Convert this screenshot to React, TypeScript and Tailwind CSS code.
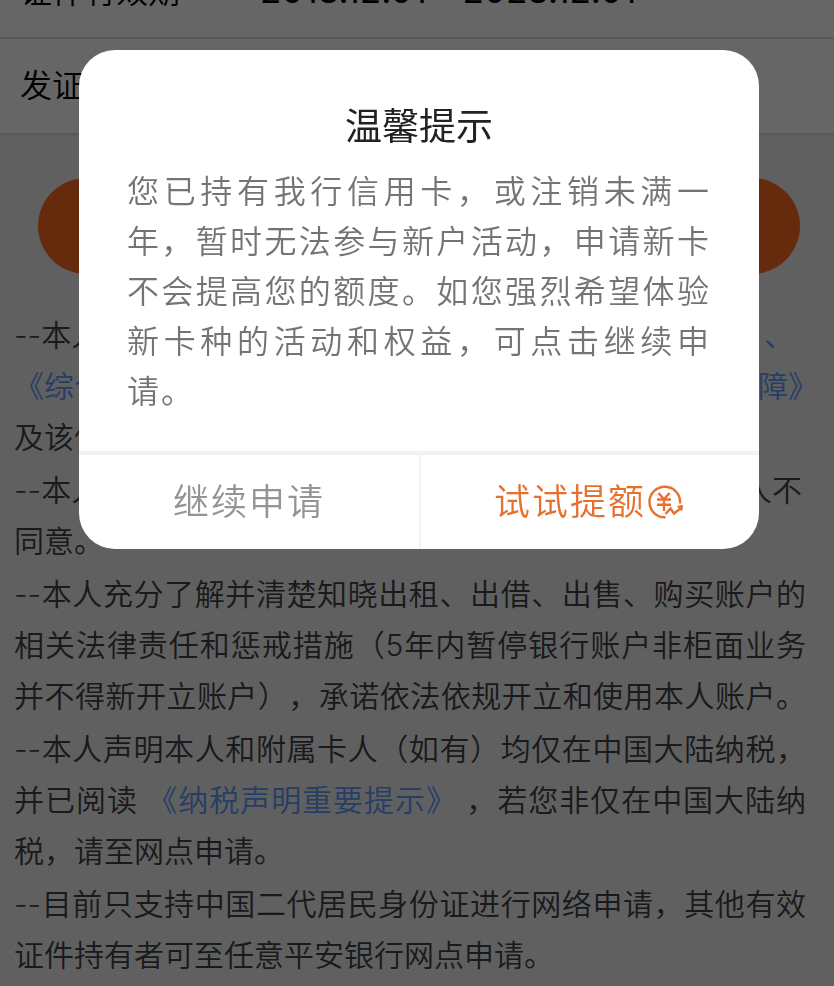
import type { ReactNode } from "react";

const FIELDS = [
  { label: "证件有效期", value: "2018.12.01 - 2028.12.01" },
  { label: "发证机关", value: "" },
];

function DocLink({ children }: { children: ReactNode }) {
  return (
    <a href="#" className="text-[#5a9cff]">
      {children}
    </a>
  );
}

function RaiseLimitIcon() {
  return (
    <svg viewBox="0 0 36 36" className="size-9" fill="none" stroke="currentColor" aria-hidden="true">
      <path d="M17.5 33.3A15.3 15.3 0 1 1 32 19.5" strokeWidth="2.4" />
      <path d="M10.5 9l5.5 6.2 5.5-6.2M16 15V27M9 15.5h14M9 20.8h14" strokeWidth="2.4" />
      <path d="M17.5 30l5-5.5 3.5 5 6.5-5" strokeWidth="2.4" />
      <path d="M29.5 22.3l5-.8-.8 5.3z" fill="currentColor" strokeWidth="1" />
    </svg>
  );
}

function Terms() {
  return (
    <section className="mt-9 flex flex-col gap-0.5 pr-7 pb-2 pl-3.5 text-justify text-[30px] leading-[51px] text-[#3e4146] [text-spacing-trim:space-all]">
      <div>
        <p className="flex justify-between pr-3">
          <span>--本人</span>
          <DocLink>、</DocLink>
        </p>
        <p className="-mr-3 flex justify-between">
          <DocLink>《综合</DocLink>
          <DocLink>保障》</DocLink>
        </p>
        <p>及该信</p>
      </div>
      <div>
        <p className="flex justify-between pr-1">
          <span>--本人</span>
          <span>人不</span>
        </p>
        <p>同意。</p>
      </div>
      <p className="[text-align-last:justify]">
        --本人充分了解并清楚知晓出租、出借、出售、购买账户的相关法律责任和惩戒措施（5年内暂停银行账户非柜面业务并不得新开立账户），承诺依法依规开立和使用本人账户。
      </p>
      <p>
        --本人声明本人和附属卡人（如有）均仅在中国大陆纳税，并已阅读 <DocLink>《纳税声明重要提示》</DocLink>{" "}
        ，若您非仅在中国大陆纳税，请至网点申请。
      </p>
      <p>--目前只支持中国二代居民身份证进行网络申请，其他有效证件持有者可至任意平安银行网点申请。</p>
    </section>
  );
}

function TipDialog() {
  return (
    <div className="fixed inset-0 bg-black/60 pt-[50px] pl-1">
      <div
        role="dialog"
        aria-modal="true"
        aria-labelledby="tip-title"
        className="mx-auto w-full max-w-[680px] overflow-hidden rounded-[36px] bg-white"
      >
        <div className="px-12 pt-[49px] pb-[34px]">
          <h2 id="tip-title" className="text-center text-[37px] leading-[56px] font-normal text-[#222]">
            温馨提示
          </h2>
          <p className="mt-3 text-justify text-[32px] leading-[50px] tracking-[2px] text-[#747474] [text-spacing-trim:space-all]">
            您已持有我行信用卡，或注销未满一年，暂时无法参与新户活动，申请新卡不会提高您的额度。如您强烈希望体验新卡种的活动和权益，可点击继续申请。
          </p>
        </div>
        <div className="grid grid-cols-2 border-t-4 border-[#f2f2f2] text-[36px] leading-[94px] tracking-[2px]">
          <button type="button" className="text-[#949494]">
            继续申请
          </button>
          <button type="button" className="flex items-center justify-center gap-0.5 border-l-2 border-[#f2f2f2] pr-0.5 text-[#e8702f]">
            试试提额
            <RaiseLimitIcon />
          </button>
        </div>
      </div>
    </div>
  );
}

export default function App() {
  return (
    <main className="min-h-screen overflow-hidden bg-[#efefef] font-['Inter','Noto_Sans_CJK_SC',sans-serif] font-[350]">
      <dl className="-mt-[57px] bg-white text-[32px] leading-[94px] text-black">
        {FIELDS.map((field) => (
          <div key={field.label} className="flex h-24 items-baseline border-b-2 border-[#dcdcdc] px-5">
            <dt className="w-60">{field.label}</dt>
            <dd className="text-[35px] font-normal">{field.value}</dd>
          </div>
        ))}
      </dl>
      <div className="pt-[43px] pr-[34px] pl-[38px]">
        <button type="button" className="h-24 w-full rounded-full bg-[#ff6c1e] text-[36px] text-white">
          下一步
        </button>
      </div>
      <Terms />
      <TipDialog />
    </main>
  );
}
